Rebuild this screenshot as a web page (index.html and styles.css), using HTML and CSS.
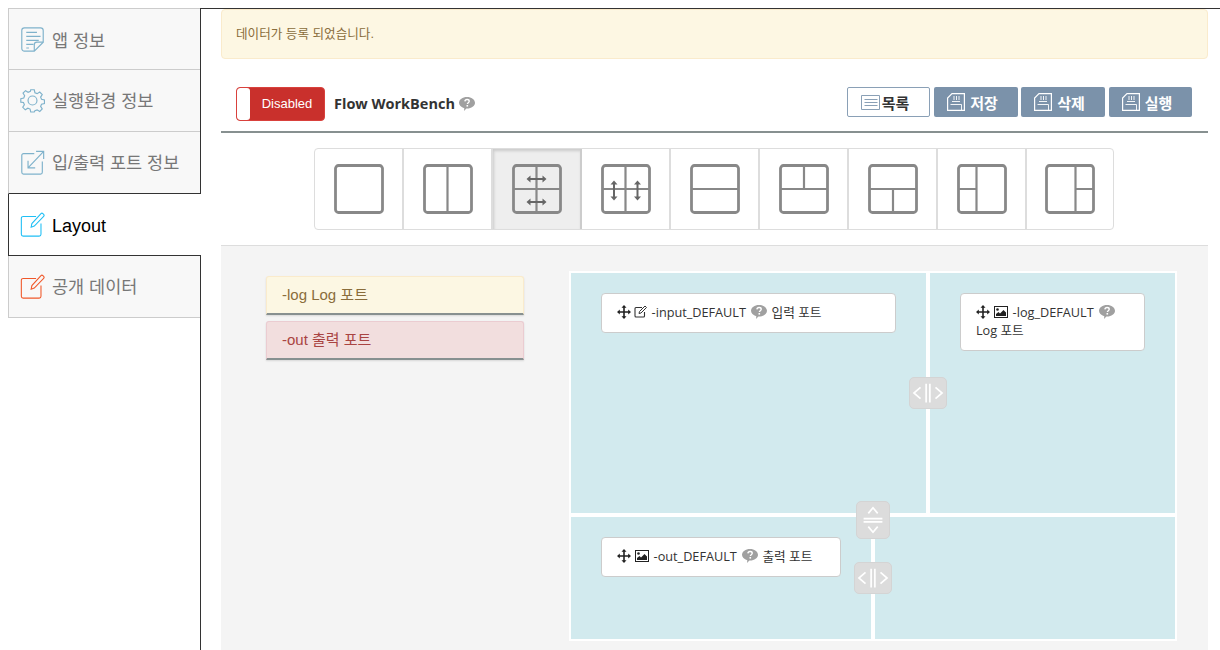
FILE: index.html
```html
<!DOCTYPE html>
<html lang="ko">
<head>
    <meta charset="UTF-8">
    <meta name="viewport" content="width=device-width, initial-scale=1.0">
    <title>Flow WorkBench</title>
    <link rel="stylesheet" href="styles.css">
</head>
<body>
    <svg class="defs" xmlns="http://www.w3.org/2000/svg">
        <symbol id="i-edit" viewBox="0 0 28 28">
            <path d="M18 5H3.500a2 2 0 0 0-2 2v18a2 2 0 0 0 2 2h18a2 2 0 0 0 2-2V13" fill="none" stroke="currentColor" stroke-width="1.200"/>
            <path d="M12.500 17l.8-4L23.500 1.800a1.500 1.500 0 0 1 2.100 0l.9.9a1.500 1.500 0 0 1 0 2.100L16 15.800z" fill="none" stroke="currentColor" stroke-width="1.200"/>
        </symbol>
        <symbol id="i-move" viewBox="0 0 14 14">
            <path d="M7 1v12M1 7h12" stroke="currentColor" stroke-width="1.600" fill="none"/>
            <path d="M7 0l2.500 2.800h-5zM7 14l2.500-2.800h-5zM0 7l2.800-2.500v5zM14 7l-2.800-2.500v5z" fill="currentColor"/>
        </symbol>
        <symbol id="i-pen" viewBox="0 0 13 13">
            <path d="M8 2.500H2a1 1 0 0 0-1 1V11a1 1 0 0 0 1 1h7.500a1 1 0 0 0 1-1V7" fill="none" stroke="currentColor" stroke-width="1.100"/>
            <path d="M5 8.500l.5-2L11 1l1.500 1.500L7 8z" fill="none" stroke="currentColor"/>
        </symbol>
        <symbol id="i-image" viewBox="0 0 14 12">
            <rect x=".5" y=".5" width="13" height="11" fill="#fff" stroke="currentColor"/>
            <circle cx="3.500" cy="3.500" r="1.300" fill="currentColor"/>
            <path d="M2 10V8l2.500-2L6 7.500 9.500 4 12 6.500V10z" fill="currentColor"/>
        </symbol>
        <symbol id="i-help" viewBox="0 0 16 14">
            <path d="M8 0c4.400 0 8 2.600 8 5.800s-3.600 5.800-8 5.800h-.6L5 14l.3-2.800C2.100 10.400 0 8.300 0 5.800 0 2.600 3.600 0 8 0z" fill="#a0a0a0"/>
            <path d="M5.900 4.400c.1-1.200 1-1.900 2.200-1.900s2.100.7 2.100 1.700c0 1.500-1.800 1.500-1.800 2.800" fill="none" stroke="#fff" stroke-width="1.400"/>
            <rect x="7.500" y="8" width="1.600" height="1.600" fill="#fff"/>
        </symbol>
        <symbol id="i-sd" viewBox="0 0 18 18">
            <path d="M5 .6h12.400v16.800H.6V5z" fill="none" stroke="currentColor" stroke-width="1.200"/>
            <path d="M7 3v4M9.500 3v4M12 3v4M5 8.500h8M3.500 11.500h11v5.900" fill="none" stroke="currentColor" stroke-width=".9"/>
        </symbol>
    </svg>

    <div class="page">
        <nav class="side">
            <a class="tab">
                <svg class="tab-icon" viewBox="0 0 28 28" fill="none" stroke="currentColor" stroke-width="1.300">
                    <path d="M5 1h18a3 3 0 0 1 3 3v13l-10 10H5a3 3 0 0 1-3-3V4a3 3 0 0 1 3-3z"/>
                    <path d="M7 6h12M7 10.500h16M7 15h14M7 19.500h8M7 23.500h3M26 17h-7a3 3 0 0 0-3 3v7"/>
                </svg>
                <span>앱 정보</span>
            </a>
            <a class="tab">
                <svg class="tab-icon" viewBox="0 0 28 28" fill="none" stroke="currentColor" stroke-width="1.300">
                    <circle cx="14" cy="14" r="5"/>
                    <path d="M12 2h4l.7 3.300 2.500 1 2.900-1.800 2.800 2.800-1.800 2.900 1 2.500 3.300.7v4l-3.300.7-1 2.500 1.800 2.900-2.800 2.800-2.900-1.800-2.500 1L16 26.900h-4l-.7-3.300-2.500-1-2.900 1.800-2.800-2.800 1.800-2.900-1-2.500L.9 15.900v-4l3.300-.7 1-2.500-1.800-2.900 2.800-2.800 2.900 1.800 2.500-1z"/>
                </svg>
                <span>실행환경 정보</span>
            </a>
            <a class="tab">
                <svg class="tab-icon" viewBox="0 0 28 28" fill="none" stroke="currentColor" stroke-width="1.300">
                    <path d="M16 4H4a2 2 0 0 0-2 2v19a2 2 0 0 0 2 2h19a2 2 0 0 0 2-2V13"/>
                    <path d="M9 20L26 2M18 1.500h8.500V10M9 12v8h8"/>
                </svg>
                <span>입/출력 포트 정보</span>
            </a>
            <a class="tab tab-active">
                <svg class="tab-icon tab-icon-cyan"><use href="#i-edit"/></svg>
                <span>Layout</span>
            </a>
            <a class="tab">
                <svg class="tab-icon tab-icon-orange"><use href="#i-edit"/></svg>
                <span>공개 데이터</span>
            </a>
        </nav>

        <main class="content">
            <div class="alert"><span>데이터가 등록 되었습니다.</span></div>

            <div class="toolbar">
                <div class="switch"><span class="knob"></span><span class="switch-label">Disabled</span></div>
                <strong class="title">Flow WorkBench</strong>
                <svg class="help help-title"><use href="#i-help"/></svg>
                <div class="actions">
                    <button class="btn btn-list">
                        <svg class="btn-icon-list" viewBox="0 0 19 15" fill="none" stroke="#8aa0b6">
                            <path d="M.5 14.500V.5h18M.5 14.500h18V.5M3.500 4.500h13M3.500 7.500h13M3.500 10.500h13"/>
                        </svg>목록
                    </button>
                    <button class="btn"><svg class="btn-icon"><use href="#i-sd"/></svg>저장</button>
                    <button class="btn"><svg class="btn-icon"><use href="#i-sd"/></svg>삭제</button>
                    <button class="btn"><svg class="btn-icon"><use href="#i-sd"/></svg>실행</button>
                </div>
            </div>

            <div class="picker-wrap">
                <div class="picker">
                    <div class="pick">
                        <svg class="grid-icon" viewBox="0 0 50 50"><rect x="1.500" y="1.500" width="47" height="47" rx="3"/></svg>
                    </div>
                    <div class="pick">
                        <svg class="grid-icon" viewBox="0 0 50 50"><rect x="1.500" y="1.500" width="47" height="47" rx="3"/><path d="M24.500 1v48"/></svg>
                    </div>
                    <div class="pick pick-active">
                        <svg class="grid-icon" viewBox="0 0 50 50">
                            <rect x="1.500" y="1.500" width="47" height="47" rx="3"/><path d="M24.500 1v48M1 25h48"/>
                            <path class="arrow" d="M17 15h15M17 38h15"/>
                            <path class="head" d="M14.500 15l4-3.500v7zM34.500 15l-4-3.500v7zM14.500 38l4-3.500v7zM34.500 38l-4-3.500v7z"/>
                        </svg>
                    </div>
                    <div class="pick">
                        <svg class="grid-icon" viewBox="0 0 50 50">
                            <rect x="1.500" y="1.500" width="47" height="47" rx="3"/><path d="M24.500 1v48M1 25h48"/>
                            <path class="arrow" d="M13 19v15M36.500 19v15"/>
                            <path class="head" d="M13 16.500l-3.500 4h7zM13 36.500l-3.500-4h7zM36.500 16.500l-3.500 4h7zM36.500 36.500l-3.500-4h7z"/>
                        </svg>
                    </div>
                    <div class="pick">
                        <svg class="grid-icon" viewBox="0 0 50 50"><rect x="1.500" y="1.500" width="47" height="47" rx="3"/><path d="M1 25h48"/></svg>
                    </div>
                    <div class="pick">
                        <svg class="grid-icon" viewBox="0 0 50 50"><rect x="1.500" y="1.500" width="47" height="47" rx="3"/><path d="M1 25h48M25 1v24"/></svg>
                    </div>
                    <div class="pick">
                        <svg class="grid-icon" viewBox="0 0 50 50"><rect x="1.500" y="1.500" width="47" height="47" rx="3"/><path d="M1 25h48M25 25v24"/></svg>
                    </div>
                    <div class="pick">
                        <svg class="grid-icon" viewBox="0 0 50 50"><rect x="1.500" y="1.500" width="47" height="47" rx="3"/><path d="M19.500 1v48M1 25h18"/></svg>
                    </div>
                    <div class="pick">
                        <svg class="grid-icon" viewBox="0 0 50 50"><rect x="1.500" y="1.500" width="47" height="47" rx="3"/><path d="M30.500 1v48M30 25h19"/></svg>
                    </div>
                </div>
            </div>

            <section class="panel">
                <div class="ports">
                    <div class="port port-log">-log Log 포트</div>
                    <div class="port port-out">-out 출력 포트</div>
                </div>

                <div class="canvas">
                    <div class="row row-top">
                        <div class="cell cell-a">
                            <div class="card card-input">
                                <svg class="ico-move"><use href="#i-move"/></svg>
                                <svg class="ico-pen"><use href="#i-pen"/></svg>
                                -input_DEFAULT
                                <svg class="help"><use href="#i-help"/></svg>
                                입력 포트
                            </div>
                        </div>
                        <div class="cell cell-b">
                            <div class="card card-log">
                                <svg class="ico-move"><use href="#i-move"/></svg>
                                <svg class="ico-image"><use href="#i-image"/></svg>
                                -log_DEFAULT
                                <svg class="help"><use href="#i-help"/></svg>
                                Log 포트
                            </div>
                        </div>
                    </div>
                    <div class="row row-bottom">
                        <div class="cell cell-c">
                            <div class="card card-out">
                                <svg class="ico-move"><use href="#i-move"/></svg>
                                <svg class="ico-image"><use href="#i-image"/></svg>
                                -out_DEFAULT
                                <svg class="help"><use href="#i-help"/></svg>
                                출력 포트
                            </div>
                        </div>
                        <div class="cell cell-d"></div>
                    </div>

                    <div class="handle handle-top">
                        <svg viewBox="0 0 38 32"><path d="M11 10l-7 6 7 6M27 10l7 6-7 6M17 6v20M21 6v20"/></svg>
                    </div>
                    <div class="handle handle-mid">
                        <svg viewBox="0 0 34 38"><path d="M12 12l5-6 5 6M12 26l5 6 5-6M7 17.500h20M7 21h20"/></svg>
                    </div>
                    <div class="handle handle-low">
                        <svg viewBox="0 0 38 32"><path d="M11 10l-7 6 7 6M27 10l7 6-7 6M17 6v20M21 6v20"/></svg>
                    </div>
                </div>
            </section>
        </main>
    </div>
</body>
</html>
```

FILE: styles.css
```css
* {
    box-sizing: border-box;
}
html, body {
    height: 650px;
    overflow: hidden;
}
body {
    margin: 0;
    padding: 8px 0 0 8px;
    background-color: #fff;
    color: #333;
    font-family: "Liberation Sans", "Noto Sans CJK KR", sans-serif;
}
.defs {
    display: none;
}
.page {
    display: flex;
    height: 642px;
}

/* side tabs */
.side {
    width: 192px;
    flex: none;
    position: relative;
    z-index: 1;
}
.tab {
    display: flex;
    align-items: center;
    gap: 7px;
    height: 62px;
    padding-left: 11px;
    background-color: #f8f8f8;
    border-left: 1px solid #ccc;
    border-bottom: 1px solid #ccc;
    color: #777;
    font-size: 17.5px;
    white-space: nowrap;
}
.tab span {
    padding-bottom: 2px;
}
.tab:first-child {
    border-top: 1px solid #ccc;
}
.tab:first-child span {
    padding-bottom: 0;
}
.tab:nth-child(3) {
    border-bottom-color: #333;
}
.tab-active {
    margin-right: -1px;
    background-color: #fff;
    border-left-color: #333;
    border-bottom-color: #333;
    color: #000;
    font-size: 18px;
}
.tab-active span {
    padding: 3px 0 0;
}
.tab-icon {
    width: 25px;
    height: 27px;
    flex: none;
    color: #7fb2cb;
}
.tab-icon-cyan {
    color: #1fbff5;
}
.tab-icon-orange {
    color: #f0582a;
}

/* main column */
.content {
    flex: 1;
    display: flex;
    flex-direction: column;
    min-width: 0;
    padding: 0 12px 0 20px;
    border-top: 1px solid #333;
    border-left: 1px solid #333;
}
.alert {
    height: 50px;
    padding: 0 14px 4px;
    display: flex;
    align-items: center;
    background-color: #fdf7e3;
    border: 1px solid #faebcc;
    border-radius: 4px;
    color: #8a6d3b;
    font-size: 12.6px;
}
.toolbar {
    display: flex;
    align-items: flex-start;
    height: 74px;
    padding: 28px 16px 0 15px;
    border-bottom: 2px solid #879090;
}
.switch {
    display: flex;
    width: 89px;
    height: 34px;
    background-color: #c9302c;
    border: 1px solid #d9413c;
    border-radius: 4px;
    overflow: hidden;
}
.knob {
    width: 13px;
    background-color: #fff;
    border-radius: 3px;
}
.switch-label {
    flex: 1;
    line-height: 32px;
    text-align: center;
    color: #fff;
    font-size: 13px;
}
.title {
    margin: 7px 4px 0 9px;
    font-size: 14.5px;
    color: #333;
    font-family: "Open Sans", "Liberation Sans", sans-serif;
}
.help {
    width: 16px;
    height: 14px;
    vertical-align: -2px;
}
.help-title {
    margin-top: 10px;
}
.actions {
    display: flex;
    gap: 3px;
    margin-left: auto;
}
.btn {
    display: flex;
    align-items: center;
    justify-content: center;
    gap: 5px;
    width: 84px;
    height: 30px;
    padding: 0 7px 0 0;
    background-color: #7b92aa;
    border: none;
    border-radius: 2px;
    color: #fff;
    font-family: inherit;
    font-size: 15px;
    font-weight: bold;
}
.btn:last-child {
    width: 83px;
    margin-left: 1px;
}
.btn-list {
    width: 83px;
    margin-right: 1px;
    gap: 2px;
    background-color: #fff;
    border: 1px solid #8aa0b6;
    color: #333;
}
.btn-icon {
    width: 18px;
    height: 18px;
    color: #fff;
}
.btn-icon-list {
    width: 19px;
    height: 15px;
}

/* layout picker */
.picker-wrap {
    display: flex;
    justify-content: center;
    padding: 15px 0;
    height: 113px;
    border-bottom: 1px solid #ddd;
}
.picker {
    display: flex;
    width: 800px;
    height: 82px;
    margin-left: -1px;
    background-color: #fff;
    border: 1px solid #ddd;
    border-radius: 4px;
    overflow: hidden;
}
.pick {
    display: flex;
    align-items: center;
    justify-content: center;
    width: 89px;
    border-right: 2px solid #ddd;
}
.pick:last-child {
    flex: 1;
    border-right: none;
}
.pick-active {
    background-color: #eee;
    border-right-color: #ccc;
    box-shadow: inset 1px 2px 3px rgba(0, 0, 0, 0.15);
}
.grid-icon {
    width: 50px;
    height: 50px;
    fill: none;
    stroke: #888;
    stroke-width: 2.2;
}
.grid-icon rect {
    stroke-width: 2.8;
}
.arrow {
    stroke: #666;
    stroke-width: 2;
}
.head {
    fill: #666;
    stroke: none;
}

/* panel */
.panel {
    flex: 1;
    display: flex;
    align-items: flex-start;
    padding: 25px 23px 0 45px;
    background-color: #f4f4f4;
}
.ports {
    width: 258px;
    flex: none;
    margin: 5px 45px 0 0;
}
.port {
    height: 39px;
    margin-bottom: 6px;
    padding: 0 15px;
    line-height: 36px;
    border: 1px solid;
    border-bottom: 2px solid #879090;
    border-radius: 3px 3px 0 0;
    box-shadow: 0 1px 2px rgba(0, 0, 0, 0.12);
    font-size: 15px;
}
.port-log {
    background-color: #fcf7e3;
    border-color: #faebcc #faebcc #879090;
    color: #8a6d3b;
}
.port-out {
    background-color: #f2dede;
    border-color: #ebccd1 #ebccd1 #879090;
    color: #a94442;
}
.canvas {
    position: relative;
    width: 608px;
    height: 370px;
    flex: none;
    padding: 2px;
    display: flex;
    flex-direction: column;
    gap: 4px;
    background-color: #fff;
}
.row {
    display: flex;
    gap: 4px;
}
.row-top {
    height: 240px;
}
.row-bottom {
    height: 122px;
}
.cell {
    padding: 20px 30px;
    background-color: #d2eaee;
}
.cell-a {
    width: 355px;
}
.cell-b {
    flex: 1;
}
.cell-c {
    width: 300px;
}
.cell-d {
    flex: 1;
}
.card {
    padding: 9px 15px 11px;
    line-height: 18px;
    background-color: #fff;
    border: 1px solid #ccc;
    border-radius: 4px;
    color: #333;
    font-family: "Open Sans", "Noto Sans CJK KR", sans-serif;
    font-size: 12.7px;
}
.card .help {
    margin: 0 1px 0 2px;
}
.card-input {
    width: 295px;
}
.card-log {
    width: 185px;
}
.card-out {
    width: 240px;
}
.ico-move {
    width: 14px;
    height: 14px;
    vertical-align: -2px;
    color: #222;
}
.ico-pen {
    width: 13px;
    height: 13px;
    margin-right: 1px;
    vertical-align: -1px;
    color: #333;
}
.ico-image {
    width: 14px;
    height: 12px;
    margin: 0 1px;
    vertical-align: -1px;
    color: #222;
}
.handle {
    position: absolute;
    display: flex;
    background-color: #dcdcdc;
    border: 1px solid #d4d4d4;
    border-radius: 5px;
}
.handle svg {
    width: 100%;
    height: 100%;
    fill: none;
    stroke: #fff;
    stroke-width: 1.8;
}
.handle-top {
    left: 340px;
    top: 106px;
    width: 38px;
    height: 32px;
}
.handle-mid {
    left: 287px;
    top: 230px;
    width: 34px;
    height: 38px;
}
.handle-low {
    left: 285px;
    top: 291px;
    width: 38px;
    height: 32px;
}
```
